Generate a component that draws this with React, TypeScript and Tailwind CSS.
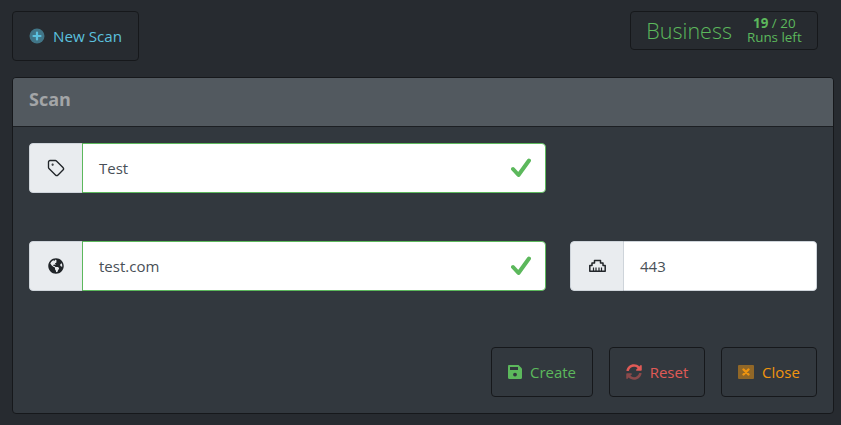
import { Tag } from 'lucide-react';
import { FaGlobeAmericas } from 'react-icons/fa';

const ValidMark = () => (
    <svg viewBox="0 0 20 20" className="w-[20px] h-[20px] shrink-0 mr-[14px]" fill="none">
        <polyline points="2,11 7.5,17 18,2.5" stroke="#5cb85c" strokeWidth="4" strokeLinecap="round" strokeLinejoin="round" />
    </svg>
);

const PortIcon = () => (
    <svg viewBox="0 0 17 13" className="w-[17px] h-[13px] mb-[1px]" fill="none" stroke="#212529">
        <path d="M.8 12.2V6.5L3 6.5V4L5.5 4V1.5L11.5 1.5V4L14 4V6.5L16.2 6.5V12.2Z" strokeWidth="1.5" strokeLinejoin="round" />
        <path d="M4.5 12V8.5M7 12V8.5M10 12V8.5M12.5 12V8.5" strokeWidth="1.2" />
    </svg>
);

const SaveIcon = () => (
    <svg viewBox="0 0 14 14" className="w-[14px] h-[14px]">
        <path d="M1.2 0H10.5L14 3.5V12.8C14 13.5 13.5 14 12.8 14H1.2C.5 14 0 13.5 0 12.8V1.2C0 .5.5 0 1.2 0Z" fill="#5cb85c" />
        <rect x="2" y="2" width="8" height="3" fill="#32383e" />
        <circle cx="7" cy="9.6" r="1.9" fill="#32383e" />
    </svg>
);

const SyncIcon = () => (
    <svg viewBox="0 0 512 512" className="w-[16px] h-[16px]" fill="#e05a56">
        <path d="M370.72 133.28C339.458 104.008 298.888 87.962 255.848 88c-77.458.068-144.328 53.178-162.791 126.85-1.344 5.363-6.122 9.15-11.651 9.15H24.103c-7.498 0-13.194-6.807-11.807-14.176C33.933 94.924 134.813 8 256 8c66.448 0 126.791 26.136 171.315 68.685L463.03 40.97C478.149 25.851 504 36.559 504 57.941V192c0 13.255-10.745 24-24 24H345.941c-21.382 0-32.09-25.851-16.971-40.971l41.75-41.749z" />
        <path opacity="0.5" d="M32 296h134.059c21.382 0 32.09 25.851 16.971 40.971l-41.75 41.75c31.262 29.273 71.835 45.319 114.876 45.28 77.418-.07 144.315-53.144 162.787-126.849 1.344-5.363 6.122-9.15 11.651-9.15h57.304c7.498 0 13.194 6.807 11.807 14.176C478.067 417.076 377.187 504 256 504c-66.448 0-126.791-26.136-171.315-68.685L48.97 471.03C33.851 486.149 8 475.441 8 454.059V320c0-13.255 10.745-24 24-24z" />
    </svg>
);

const CloseIcon = () => (
    <svg viewBox="0 0 16 14" className="w-[16px] h-[14px]">
        <rect width="16" height="14" rx="1" fill="#f0950f" opacity="0.5" />
        <path d="M5.5 4.5L10.5 9.5M10.5 4.5L5.5 9.5" stroke="#f0950f" strokeWidth="2.4" strokeLinecap="round" />
    </svg>
);

const PlusIcon = () => (
    <svg viewBox="0 0 16 16" className="w-[16px] h-[16px]">
        <circle cx="8" cy="8" r="7.5" fill="#5bc0de" opacity="0.5" />
        <path d="M8 4.5V11.5M4.5 8H11.5" stroke="#5bc0de" strokeWidth="2.2" strokeLinecap="round" />
    </svg>
);

const App = () => {
    return (
        <div className="w-[841px] h-[425px] overflow-hidden bg-[#272b30] px-[12px] pt-[11px] text-[15px] font-['Open_Sans','Noto_Sans',sans-serif]">
            {/* Top bar */}
            <div className="flex justify-between items-start pr-[11px] h-[66px]">
                <button className="w-[127px] h-[50px] flex items-center justify-center gap-[8px] rounded-[4px] border border-[#16181b] text-[#5bc0de]">
                    <PlusIcon />
                    <span className="text-[15.2px]">New Scan</span>
                </button>
                <div className="w-[188px] h-[39px] flex items-center justify-center gap-[15px] rounded-[4px] border border-[#16181b] text-[#5cb85c]">
                    <span className="text-[21.5px] font-light leading-none">Business</span>
                    <div className="text-[13.4px] leading-[14px] text-center mb-[2px]">
                        <div><b>19</b> / 20</div>
                        <div>Runs left</div>
                    </div>
                </div>
            </div>

            {/* Scan card */}
            <div className="w-[822px] h-[337px] rounded-[4px] border border-[#16181b] bg-[#32383e]">
                <div className="h-[49px] flex items-center px-[16px] pb-[6px] bg-[#52595f] border-b border-[#1c1f23] rounded-t-[3px]">
                    <h2 className="text-[18px] font-bold text-[#a3a5a7]">Scan</h2>
                </div>
                <div className="px-[16px] pt-[16px]">
                    <div className="w-[517px] h-[50px] flex rounded-[4px] overflow-hidden">
                        <div className="w-[53px] flex items-center justify-center bg-[#e9ecef] border border-r-0 border-[#ced4da] rounded-l-[4px]">
                            <Tag size={18} color="#212529" strokeWidth={1.8} />
                        </div>
                        <div className="flex-1 flex items-center bg-white border border-[#5cb85c] rounded-r-[4px] pl-[16px] text-[#495057]">
                            <span className="flex-1">Test</span>
                            <ValidMark />
                        </div>
                    </div>
                    <div className="flex gap-[24px] mt-[48px]">
                        <div className="w-[517px] h-[50px] flex rounded-[4px] overflow-hidden">
                            <div className="w-[53px] flex items-center justify-center bg-[#e9ecef] border border-r-0 border-[#ced4da] rounded-l-[4px]">
                                <FaGlobeAmericas size={16} color="#212529" />
                            </div>
                            <div className="flex-1 flex items-center bg-white border border-[#5cb85c] rounded-r-[4px] pl-[16px] text-[#495057]">
                                <span className="flex-1">test.com</span>
                                <ValidMark />
                            </div>
                        </div>
                        <div className="w-[247px] h-[50px] flex rounded-[4px] overflow-hidden">
                            <div className="w-[54px] flex items-center justify-center bg-[#e9ecef] border border-[#ced4da] rounded-l-[4px]">
                                <PortIcon />
                            </div>
                            <div className="flex-1 flex items-center bg-white border border-l-0 border-[#ced4da] rounded-r-[4px] pl-[16px] text-[#495057]">
                                443
                            </div>
                        </div>
                    </div>
                    <div className="flex justify-end gap-[16px] mt-[56px]">
                        <button className="w-[102px] h-[50px] flex items-center justify-center gap-[8px] rounded-[4px] border border-[#16181b] text-[#5cb85c]">
                            <SaveIcon />
                            <span>Create</span>
                        </button>
                        <button className="w-[96px] h-[50px] flex items-center justify-center gap-[8px] rounded-[4px] border border-[#16181b] text-[#e05a56]">
                            <SyncIcon />
                            <span>Reset</span>
                        </button>
                        <button className="w-[96px] h-[50px] flex items-center justify-center gap-[8px] rounded-[4px] border border-[#16181b] text-[#f0950f]">
                            <CloseIcon />
                            <span>Close</span>
                        </button>
                    </div>
                </div>
            </div>
        </div>
    );
};

export default App;
